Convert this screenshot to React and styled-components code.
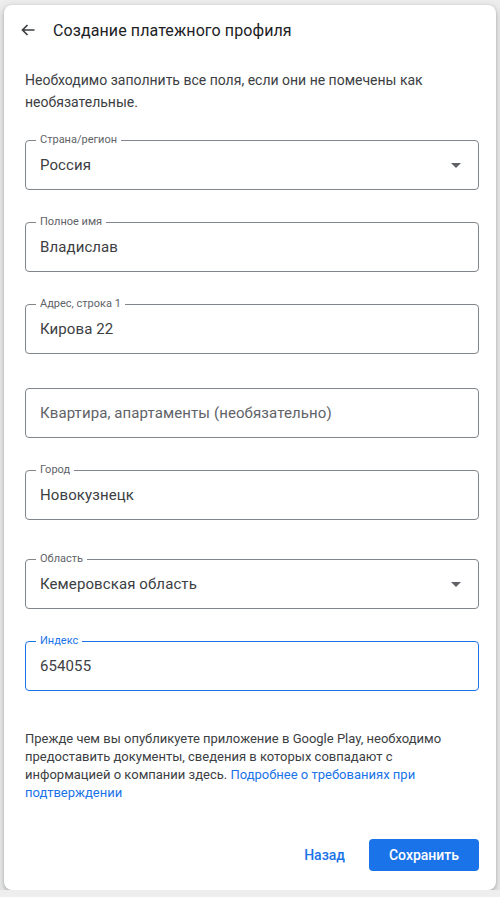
import styled, { createGlobalStyle } from "styled-components";

const GlobalStyle = createGlobalStyle`
  html, body {
    margin: 0;
    padding: 0;
    background: #eeeeee;
  }
  body {
    font-family: Roboto, "Noto Sans", "Liberation Sans", sans-serif;
    -webkit-font-smoothing: antialiased;
  }
`;

const Dialog = styled.div`
  box-sizing: border-box;
  width: 492px;
  height: 885px;
  margin: 5px 4px 0 4px;
  background: #ffffff;
  border-radius: 8px;
  box-shadow: 0 1px 3px rgba(60, 64, 67, 0.3), 0 4px 8px 3px rgba(60, 64, 67, 0.15);
  padding: 0 17px 19px 21px;
  display: flex;
  flex-direction: column;
`;

const Header = styled.div`
  height: 50px;
  display: flex;
  align-items: center;
  gap: 18px;
  margin-left: -4px;
`;

const BackButton = styled.button`
  width: 14px;
  height: 12px;
  padding: 0;
  border: none;
  background: none;
  display: flex;
  align-items: center;
  justify-content: center;
  cursor: pointer;
`;

const Title = styled.h1`
  margin: 0;
  font-size: 16px;
  font-weight: 400;
  color: #202124;
  letter-spacing: 0.1px;
`;

const Intro = styled.p`
  margin: 14px 0 0 0;
  font-size: 14px;
  line-height: 22px;
  color: #3c4043;
`;

const Field = styled.div`
  position: relative;
  box-sizing: border-box;
  height: 50px;
  margin-top: ${(p) => p.$gap}px;
  border: 1px solid ${(p) => (p.$focused ? "#1a73e8" : "#80868b")};
  border-radius: 4px;
  display: flex;
  align-items: center;
  padding: 0 17px 0 14px;
`;

const Label = styled.span`
  position: absolute;
  top: -8px;
  left: 10px;
  padding: 0 4px;
  background: #ffffff;
  font-size: 11px;
  line-height: 14px;
  color: ${(p) => (p.$focused ? "#1a73e8" : "#5f6368")};
`;

const Value = styled.span`
  flex: 1;
  font-size: 15px;
  color: ${(p) => (p.$placeholder ? "#5f6368" : "#3c4043")};
  letter-spacing: 0.1px;
`;

const Caret = styled.span`
  width: 0;
  height: 0;
  border-left: 5px solid transparent;
  border-right: 5px solid transparent;
  border-top: 5px solid #5f6368;
`;

const Note = styled.p`
  margin: 39px 0 0 0;
  font-size: 13px;
  line-height: 18px;
  color: #3c4043;
`;

const Link = styled.a`
  color: #1a73e8;
  text-decoration: none;
`;

const Actions = styled.div`
  margin-top: auto;
  display: flex;
  justify-content: flex-end;
  align-items: center;
  gap: 16px;
`;

const TextButton = styled.button`
  height: 32px;
  padding: 0 8px;
  border: none;
  background: none;
  font-family: inherit;
  font-size: 14px;
  font-weight: 500;
  color: #1a73e8;
  cursor: pointer;
`;

const PrimaryButton = styled.button`
  width: 110px;
  height: 32px;
  border: none;
  border-radius: 4px;
  background: #1a73e8;
  font-family: inherit;
  font-size: 14px;
  font-weight: 500;
  color: #ffffff;
  cursor: pointer;
`;

const fields = [
  { label: "Страна/регион", value: "Россия", select: true, gap: 27 },
  { label: "Полное имя", value: "Владислав", gap: 32 },
  { label: "Адрес, строка 1", value: "Кирова 22", gap: 32 },
  { value: "Квартира, апартаменты (необязательно)", placeholder: true, gap: 34 },
  { label: "Город", value: "Новокузнецк", gap: 32 },
  { label: "Область", value: "Кемеровская область", select: true, gap: 39 },
  { label: "Индекс", value: "654055", focused: true, gap: 32 },
];

const App = () => {
  return (
    <>
      <GlobalStyle />
      <Dialog>
        <Header>
          <BackButton type="button" aria-label="Назад">
            <svg width="14" height="12" viewBox="0 0 14 12">
              <path
                d="M13.5 6H1.5M6.5 1L1.5 6l5 5"
                fill="none"
                stroke="#3c4043"
                strokeWidth="1.7"
              />
            </svg>
          </BackButton>
          <Title>Создание платежного профиля</Title>
        </Header>
        <Intro>
          Необходимо заполнить все поля, если они не помечены как
          необязательные.
        </Intro>
        {fields.map((f, i) => (
          <Field key={i} $gap={f.gap} $focused={f.focused}>
            {f.label && <Label $focused={f.focused}>{f.label}</Label>}
            <Value $placeholder={f.placeholder}>{f.value}</Value>
            {f.select && <Caret />}
          </Field>
        ))}
        <Note>
          Прежде чем вы опубликуете приложение в Google Play, необходимо
          предоставить документы, сведения в которых совпадают с информацией о
          компании здесь.{" "}
          <Link href="#">Подробнее о требованиях при подтверждении</Link>
        </Note>
        <Actions>
          <TextButton type="button">Назад</TextButton>
          <PrimaryButton type="button">Сохранить</PrimaryButton>
        </Actions>
      </Dialog>
    </>
  );
};

export default App;
